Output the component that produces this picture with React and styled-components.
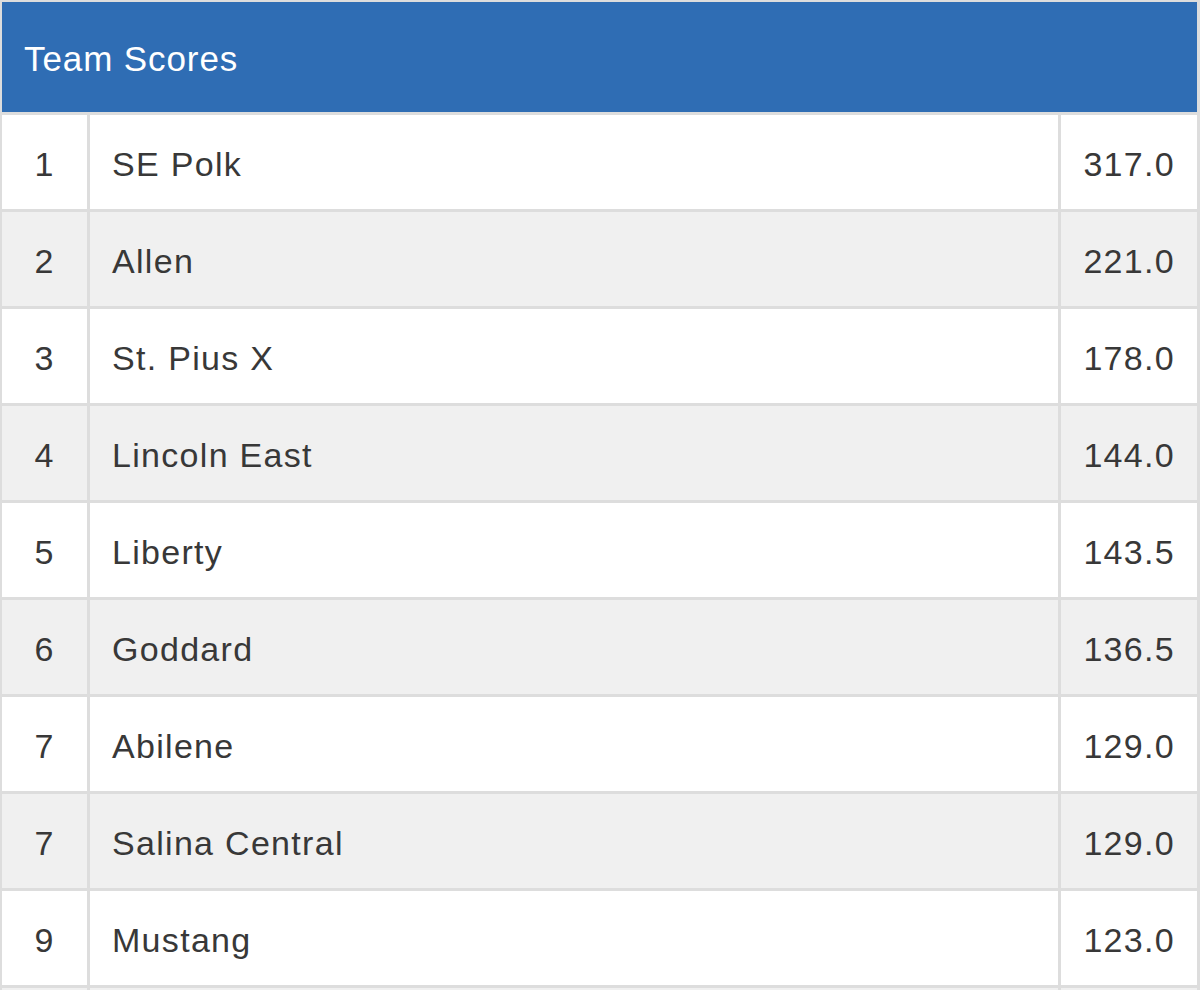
import styled, { createGlobalStyle } from 'styled-components';

const GlobalStyle = createGlobalStyle`
  html, body {
    margin: 0;
    padding: 0;
    background: #ffffff;
  }
  body {
    font-family: 'Liberation Sans', Arial, Helvetica, sans-serif;
    color: #333333;
  }
`;

const Board = styled.section`
  display: grid;
  grid-template-columns: 85px 1fr 136px;
  grid-template-rows: 110px;
  grid-auto-rows: 94px;
  gap: 3px;
  width: 1200px;
  box-sizing: border-box;
  padding: 2px 3px 0 2px;
  background: #dddddd;
`;

const Header = styled.div`
  grid-column: 1 / -1;
  display: flex;
  align-items: center;
  padding: 4px 0 0 22px;
  box-sizing: border-box;
  background: #2f6db4;
  color: #ffffff;
  font-size: 35px;
  letter-spacing: 0.9px;
`;

const Cell = styled.div`
  display: flex;
  align-items: center;
  padding-top: 5px;
  box-sizing: border-box;
  background: ${(p) => (p.$striped ? '#f0f0f0' : '#ffffff')};
  font-size: 34px;
  letter-spacing: 1.3px;
  color: #383838;
  justify-content: ${(p) =>
    p.$align === 'center' ? 'center' : p.$align === 'right' ? 'flex-end' : 'flex-start'};
  padding-left: ${(p) => (p.$align === 'left' ? '22px' : '0')};
  padding-right: ${(p) => (p.$align === 'right' ? '22px' : '0')};
`;

const teams = [
  { place: '1', name: 'SE Polk', score: '317.0' },
  { place: '2', name: 'Allen', score: '221.0' },
  { place: '3', name: 'St. Pius X', score: '178.0' },
  { place: '4', name: 'Lincoln East', score: '144.0' },
  { place: '5', name: 'Liberty', score: '143.5' },
  { place: '6', name: 'Goddard', score: '136.5' },
  { place: '7', name: 'Abilene', score: '129.0' },
  { place: '7', name: 'Salina Central', score: '129.0' },
  { place: '9', name: 'Mustang', score: '123.0' },
  { place: '', name: '', score: '' },
];

function Row({ team, striped }) {
  return (
    <>
      <Cell $align="center" $striped={striped}>{team.place}</Cell>
      <Cell $align="left" $striped={striped}>{team.name}</Cell>
      <Cell $align="right" $striped={striped}>{team.score}</Cell>
    </>
  );
}

function App() {
  return (
    <>
      <GlobalStyle />
      <Board>
        <Header>Team Scores</Header>
        {teams.map((team, i) => (
          <Row key={i} team={team} striped={i % 2 === 1} />
        ))}
      </Board>
    </>
  );
}

export default App;
